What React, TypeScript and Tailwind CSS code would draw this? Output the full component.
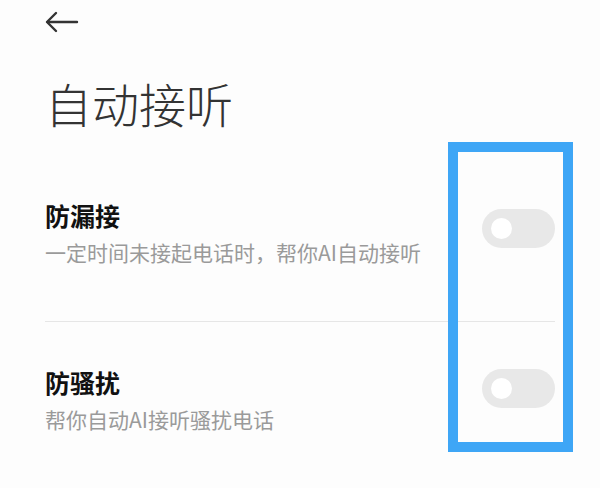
import React from 'react';

function Toggle({ className }: { className: string }) {
  return (
    <div className={`flex h-[39px] w-[73px] shrink-0 items-center rounded-full bg-[#e8e8e8] pl-[9px] ${className}`}>
      <div className="h-[21px] w-[21px] rounded-full bg-white" />
    </div>
  );
}

function SettingRow({ title, desc, toggleClass }: { title: string; desc: string; toggleClass: string }) {
  return (
    <div className="flex items-start justify-between">
      <div className="flex flex-col">
        <p className="text-[25px] font-bold leading-[26px] text-[#111]">{title}</p>
        <p className="mt-[14px] text-[21px] leading-[21px] text-[#9a9a9a]">{desc}</p>
      </div>
      <Toggle className={toggleClass} />
    </div>
  );
}

export default function App() {
  return (
    <div
      className="relative h-[488px] w-[600px] overflow-hidden bg-[#fdfdfd]"
      style={{ fontFamily: '"Noto Sans CJK SC", "Noto Sans", sans-serif' }}
    >
      <div className="px-[45px]">
        <div className="pt-[11px]">
          <svg width="34" height="22" viewBox="0 0 34 22" fill="none" stroke="#333" strokeWidth="2.4" strokeLinecap="round" strokeLinejoin="round">
            <path d="M32 11H2.5" />
            <path d="M11 2L2 11l9 9" />
          </svg>
        </div>
        <h1 className="mt-[46px] text-[47px] font-light leading-[47px] text-[#333]">自动接听</h1>

        <div className="mt-[76px]">
          <SettingRow title="防漏接" desc="一定时间未接起电话时，帮你AI自动接听" toggleClass="mt-[7px]" />
        </div>
        <div className="mt-[58px] h-px bg-[#e6e6e6]" />
        <div className="mt-[47px]">
          <SettingRow title="防骚扰" desc="帮你自动AI接听骚扰电话" toggleClass="mt-0" />
        </div>
      </div>

      <div className="absolute left-[448px] top-[142px] h-[310px] w-[125px] border-[10px] border-[#3ea6f6]" />
    </div>
  );
}
